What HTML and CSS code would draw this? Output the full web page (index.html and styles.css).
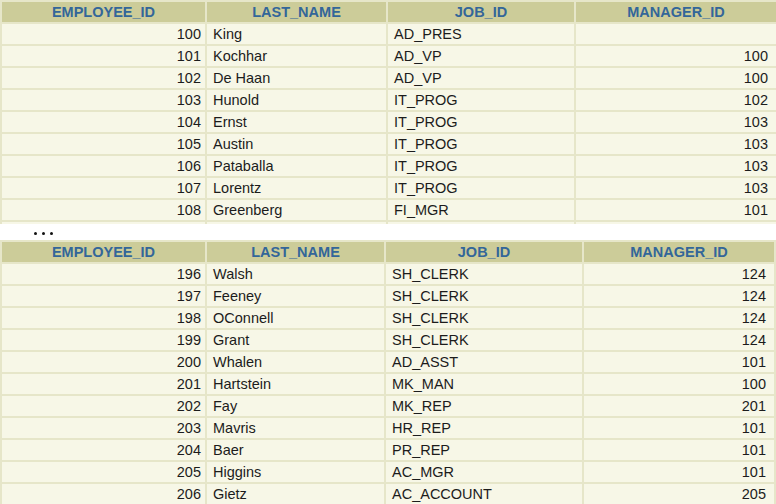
FILE: index.html
```html
<!DOCTYPE html>
<html>
<head>
<meta charset="utf-8">
<link rel="stylesheet" href="styles.css">
</head>
<body>
<div class="clip">
<table class="grid t1">
<colgroup><col class="c1"><col class="c2"><col class="c3"><col class="c4"></colgroup>
<thead><tr><th>EMPLOYEE_ID</th><th>LAST_NAME</th><th>JOB_ID</th><th>MANAGER_ID</th></tr></thead>
<tbody>
<tr><td class="num">100</td><td>King</td><td>AD_PRES</td><td class="num mgr"></td></tr>
<tr><td class="num">101</td><td>Kochhar</td><td>AD_VP</td><td class="num mgr">100</td></tr>
<tr><td class="num">102</td><td>De Haan</td><td>AD_VP</td><td class="num mgr">100</td></tr>
<tr><td class="num">103</td><td>Hunold</td><td>IT_PROG</td><td class="num mgr">102</td></tr>
<tr><td class="num">104</td><td>Ernst</td><td>IT_PROG</td><td class="num mgr">103</td></tr>
<tr><td class="num">105</td><td>Austin</td><td>IT_PROG</td><td class="num mgr">103</td></tr>
<tr><td class="num">106</td><td>Pataballa</td><td>IT_PROG</td><td class="num mgr">103</td></tr>
<tr><td class="num">107</td><td>Lorentz</td><td>IT_PROG</td><td class="num mgr">103</td></tr>
<tr><td class="num">108</td><td>Greenberg</td><td>FI_MGR</td><td class="num mgr">101</td></tr>
<tr><td class="num"></td><td></td><td></td><td class="num mgr"></td></tr>
</tbody>
</table>
</div>
<div class="ellipsis"><span></span><span></span><span></span></div>
<table class="grid t2">
<colgroup><col class="c1"><col class="c2"><col class="c3"><col class="c4"></colgroup>
<thead><tr><th>EMPLOYEE_ID</th><th>LAST_NAME</th><th>JOB_ID</th><th>MANAGER_ID</th></tr></thead>
<tbody>
<tr><td class="num">196</td><td>Walsh</td><td>SH_CLERK</td><td class="num mgr">124</td></tr>
<tr><td class="num">197</td><td>Feeney</td><td>SH_CLERK</td><td class="num mgr">124</td></tr>
<tr><td class="num">198</td><td>OConnell</td><td>SH_CLERK</td><td class="num mgr">124</td></tr>
<tr><td class="num">199</td><td>Grant</td><td>SH_CLERK</td><td class="num mgr">124</td></tr>
<tr><td class="num">200</td><td>Whalen</td><td>AD_ASST</td><td class="num mgr">101</td></tr>
<tr><td class="num">201</td><td>Hartstein</td><td>MK_MAN</td><td class="num mgr">100</td></tr>
<tr><td class="num">202</td><td>Fay</td><td>MK_REP</td><td class="num mgr">201</td></tr>
<tr><td class="num">203</td><td>Mavris</td><td>HR_REP</td><td class="num mgr">101</td></tr>
<tr><td class="num">204</td><td>Baer</td><td>PR_REP</td><td class="num mgr">101</td></tr>
<tr><td class="num">205</td><td>Higgins</td><td>AC_MGR</td><td class="num mgr">101</td></tr>
<tr><td class="num">206</td><td>Gietz</td><td>AC_ACCOUNT</td><td class="num mgr">205</td></tr>
</tbody>
</table>
</body>
</html>
```
FILE: styles.css
```css
html, body {
  margin: 0;
  padding: 0;
  background: #ffffff;
  overflow: hidden;
  width: 776px;
  height: 504px;
}
body {
  font-family: "Liberation Sans", Arial, sans-serif;
  font-size: 14.5px;
  color: #1c1c1c;
}
.clip {
  height: 224px;
  overflow: hidden;
}
.grid {
  table-layout: fixed;
  border-collapse: separate;
  border-spacing: 2px;
  background: #e6e6c9;
}
.grid th, .grid td {
  height: 20px;
  padding: 0 6px;
  line-height: 20px;
  white-space: nowrap;
  overflow: hidden;
  box-sizing: border-box;
}
.grid th {
  background: #cccc99;
  color: #336699;
  font-weight: bold;
  text-align: center;
}
.grid td {
  background: #f7f7e7;
  text-align: left;
}
.grid td.num {
  text-align: right;
  padding-right: 4px;
}
.grid td.mgr {
  padding-right: 8px;
}
.t1 { width: 778px; }
.t1 .c1 { width: 203px; }
.t1 .c2 { width: 179px; }
.t1 .c3 { width: 186px; }
.t1 .c4 { width: 200px; }
.t2 { width: 776px; }
.t2 .c1 { width: 203px; }
.t2 .c2 { width: 177px; }
.t2 .c3 { width: 196px; }
.t2 .c4 { width: 190px; }
.ellipsis {
  height: 16px;
  display: flex;
  align-items: center;
  gap: 5px;
  padding-left: 34px;
  padding-top: 2px;
  box-sizing: border-box;
}
.ellipsis span {
  width: 3px;
  height: 3px;
  background: #111;
  border-radius: 50%;
}
```
